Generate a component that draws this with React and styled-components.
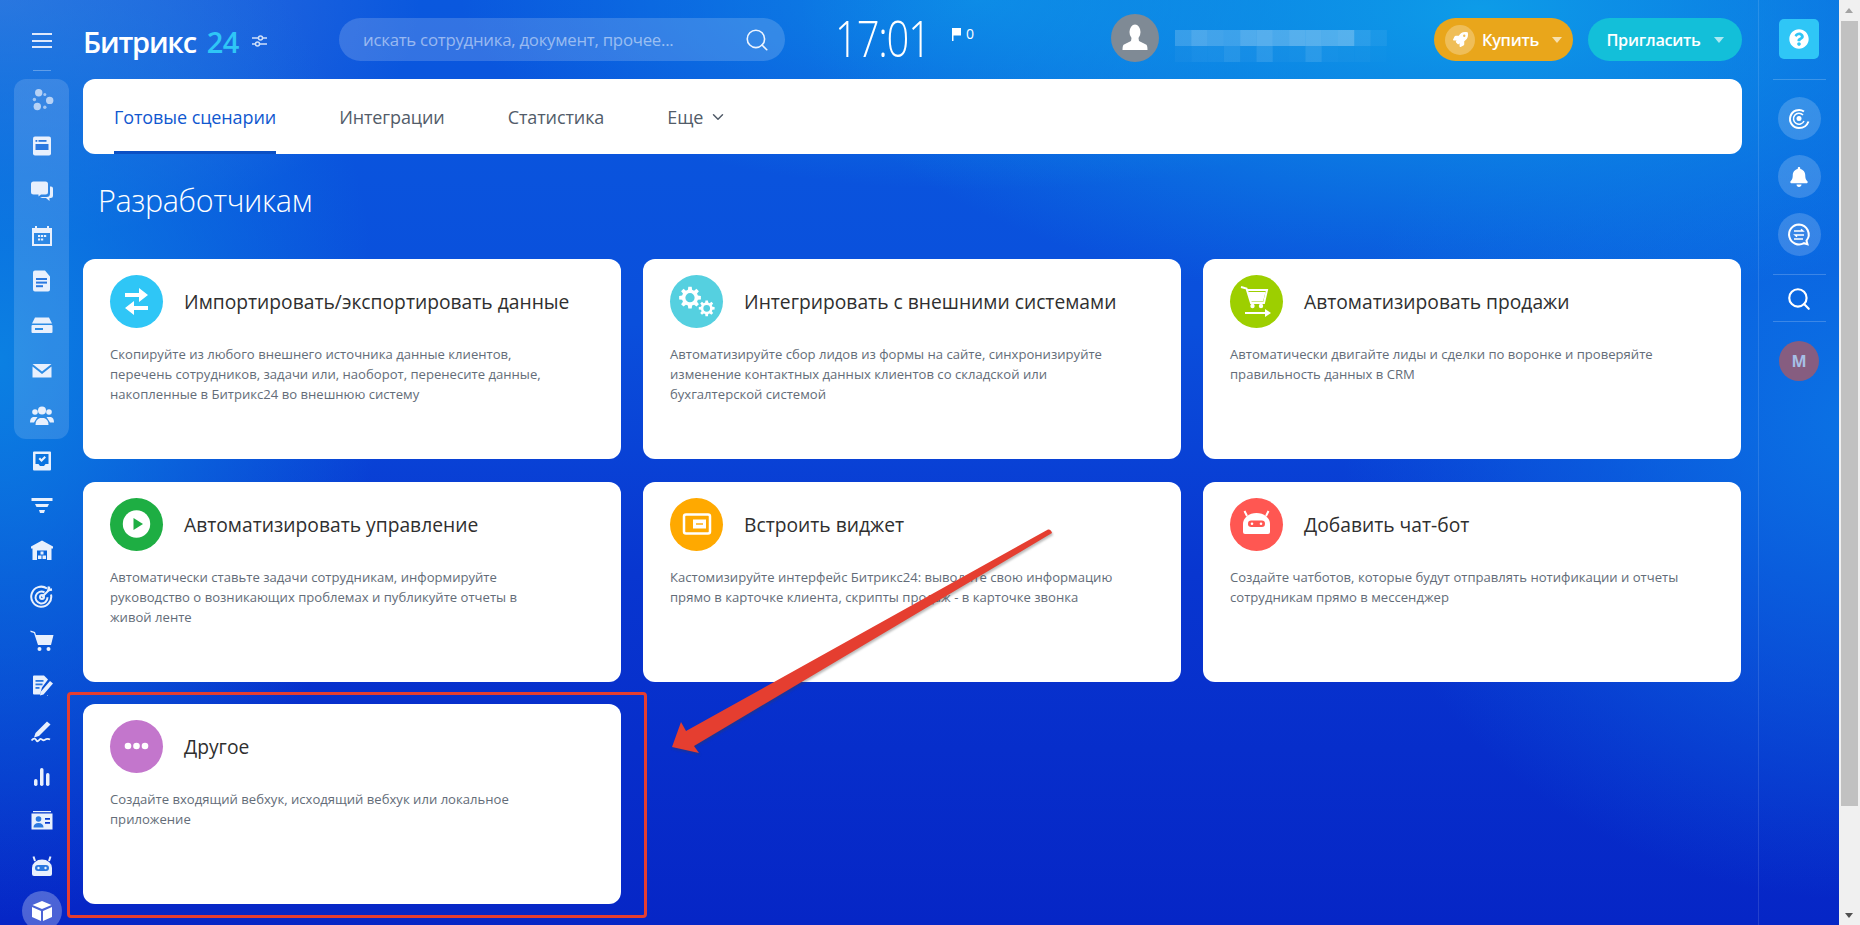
import React from "react";
import styled, { createGlobalStyle } from "styled-components";
import { Search, ChevronDown } from "lucide-react";
import { FaRocket, FaQuestionCircle, FaBell } from "react-icons/fa";

const GlobalStyle = createGlobalStyle`
  html, body {
    margin: 0;
    height: 100%;
    overflow: hidden;
  }
  body {
    font-family: "Open Sans", "Noto Sans", sans-serif;
  }
`;

const Page = styled.div`
  position: relative;
  display: flex;
  width: 1860px;
  height: 925px;
  overflow: hidden;
  background:
    radial-gradient(680px 300px at 1480px 10px, #0d9ce8 0%, rgba(13, 156, 232, 0) 100%),
    radial-gradient(520px 190px at 980px 0px, #0d86e6 0%, rgba(13, 134, 230, 0) 100%),
    radial-gradient(380px 560px at 0px 360px, #0b80e2 0%, rgba(11, 128, 226, 0) 100%),
    radial-gradient(420px 240px at 0px 0px, #3a72de 0%, rgba(58, 114, 222, 0) 100%),
    radial-gradient(520px 480px at 1860px 420px, #0b72e4 0%, rgba(11, 114, 228, 0) 100%),
    linear-gradient(180deg, #0a58de 0%, #0a4fdc 35%, #0836d0 62%, #0626c6 100%);
`;

const LeftNav = styled.nav`
  flex: 0 0 83px;
  display: flex;
  flex-direction: column;
  align-items: center;
`;

const Burger = styled.div`
  flex: none;
  width: 20px;
  height: 15px;
  margin-top: 33px;
  border-top: 2px solid #dfe9fb;
  border-bottom: 2px solid #dfe9fb;
  position: relative;
  box-sizing: border-box;
  &::after {
    content: "";
    position: absolute;
    left: 0;
    right: 0;
    top: 4.5px;
    height: 2px;
    background: #dfe9fb;
  }
`;

const NavRule = styled.div`
  flex: none;
  width: 18px;
  height: 1px;
  margin-top: 22px;
  margin-bottom: 8px;
  background: rgba(255, 255, 255, 0.3);
`;

const NavGroup = styled.div`
  flex: none;
  width: 55px;
  border-radius: 12px;
  background: rgba(255, 255, 255, 0.14);
`;

const NavItem = styled.div`
  flex: 0 0 45px;
  height: 45px;
  width: 55px;
  box-sizing: border-box;
  padding-bottom: 2px;
  display: flex;
  align-items: center;
  justify-content: center;
  svg {
    width: 24px;
    height: 24px;
    fill: #e8f0fd;
  }
`;

const ActiveNavItem = styled(NavItem)`
  position: relative;
  &::before {
    content: "";
    position: absolute;
    left: 7.5px;
    top: 2px;
    width: 40px;
    height: 40px;
    border-radius: 50%;
    background: rgba(255, 255, 255, 0.28);
  }
  svg {
    position: relative;
  }
`;

const Content = styled.div`
  flex: 1;
  min-width: 0;
  padding-right: 16px;
`;

const Header = styled.header`
  height: 79px;
  display: flex;
  align-items: flex-start;
`;

const Logo = styled.div`
  flex: 0 0 256px;
  display: flex;
  align-items: center;
  height: 40px;
  margin-top: 21px;
  color: #fff;
  font-size: 29px;
  font-weight: 600;
  letter-spacing: -1.2px;
  white-space: nowrap;
  span {
    color: #2fc6f6;
    font-weight: 600;
    margin-left: 11px;
    letter-spacing: -0.6px;
  }
  svg {
    margin-left: 12px;
    width: 17px;
    height: 14px;
  }
`;

const SearchBox = styled.div`
  flex: 0 0 446px;
  height: 43px;
  margin-top: 18px;
  box-sizing: border-box;
  padding: 0 15px 0 24px;
  display: flex;
  align-items: center;
  border-radius: 22px;
  background: rgba(255, 255, 255, 0.17);
  svg {
    color: #eef5ff;
    flex: none;
  }
`;

const SearchInput = styled.input`
  flex: 1;
  min-width: 0;
  padding: 0;
  border: 0;
  outline: 0;
  background: none;
  color: #fff;
  font-family: inherit;
  font-size: 16.8px;
  letter-spacing: -0.25px;
  &::placeholder {
    color: rgba(255, 255, 255, 0.5);
    opacity: 1;
  }
`;

const Clock = styled.div`
  flex: 0 0 92px;
  min-width: 0;
  margin: 12px 0 0 50px;
  color: #fff;
  font-size: 50px;
  font-weight: 300;
  line-height: 52px;
  letter-spacing: -1.5px;
  white-space: nowrap;
  transform: scaleX(0.8);
  transform-origin: left center;
`;

const Flag = styled.div`
  flex: 0 0 22px;
  min-width: 0;
  display: flex;
  align-items: center;
  gap: 5px;
  margin: 24px 0 0 25px;
  color: #fff;
  font-size: 14px;
  line-height: 20px;
  svg {
    width: 9px;
    height: 13px;
  }
`;

const UserPic = styled.div`
  flex: none;
  width: 48px;
  height: 48px;
  margin: 14px 0 0 137px;
  border-radius: 50%;
  background: #7f8a95;
  display: flex;
  align-items: center;
  justify-content: center;
  svg {
    width: 32px;
    height: 32px;
  }
`;

const Mosaic = styled.svg`
  flex: none;
  width: 212px;
  height: 32px;
  margin: 30px 0 0 16px;
`;

const BuyButton = styled.button`
  flex: none;
  height: 43px;
  margin: 18px 0 0 47px;
  padding: 0;
  width: ${(p) => p.$width}px;
  border: 0;
  border-radius: 22px;
  background: ${(p) => p.$bg};
  color: #fff;
  font-family: inherit;
  font-size: 16.3px;
  font-weight: 600;
  letter-spacing: -0.3px;
  display: flex;
  align-items: center;
  justify-content: center;
  &::after {
    content: "";
    margin-left: 13px;
    border-left: 5.5px solid transparent;
    border-right: 5.5px solid transparent;
    border-top: 6px solid rgba(255, 255, 255, 0.65);
  }
`;

const InviteButton = styled(BuyButton)`
  margin-left: 15px;
`;

const RocketBadge = styled.span`
  width: 30px;
  height: 30px;
  margin-right: 7px;
  border-radius: 50%;
  background: rgba(255, 255, 255, 0.27);
  display: flex;
  align-items: center;
  justify-content: center;
  font-size: 15px;
`;

const Tabs = styled.div`
  height: 75px;
  box-sizing: border-box;
  padding-left: 31px;
  display: flex;
  gap: 63px;
  border-radius: 12px;
  background: #fff;
  overflow: hidden;
`;

const Tab = styled.div`
  display: flex;
  align-items: center;
  gap: 6px;
  height: 75px;
  box-sizing: border-box;
  padding-top: 3px;
  border-bottom: 3px solid ${(p) => (p.$active ? "#0b50c4" : "transparent")};
  color: ${(p) => (p.$active ? "#1058d0" : "#525c69")};
  font-size: 18px;
  letter-spacing: -0.1px;
  white-space: nowrap;
`;

const Title = styled.h1`
  margin: 0;
  height: 105px;
  box-sizing: border-box;
  padding: 26px 0 0 15px;
  color: #fff;
  font-size: 30.5px;
  font-weight: 300;
  line-height: 40px;
  letter-spacing: -0.3px;
`;

const CardGrid = styled.div`
  display: grid;
  grid-template-columns: repeat(3, 538px);
  grid-auto-rows: 200px;
  gap: 22.5px 22px;
`;

const Card = styled.article`
  box-sizing: border-box;
  padding: 16px 27px 0;
  border-radius: 12px;
  background: #fff;
`;

const CardHead = styled.div`
  display: flex;
  align-items: center;
  gap: 21px;
`;

const CardIcon = styled.div`
  flex: none;
  width: 53px;
  height: 53px;
  border-radius: 50%;
  background: ${(p) => p.$color};
  svg {
    display: block;
    width: 53px;
    height: 53px;
  }
`;

const CardTitle = styled.h3`
  margin: 0;
  color: #2f2f2f;
  font-size: 19.25px;
  font-weight: 500;
  white-space: nowrap;
`;

const CardText = styled.p`
  margin: 16px 0 0;
  color: #636c78;
  font-size: 13.1px;
  line-height: 20px;
  white-space: nowrap;
`;

const RightBar = styled.aside`
  flex: 0 0 81px;
  box-sizing: border-box;
  padding-top: 19px;
  display: flex;
  flex-direction: column;
  align-items: center;
  border-left: 1px solid rgba(255, 255, 255, 0.12);
`;

const HelpButton = styled.div`
  width: 40px;
  height: 40px;
  flex: none;
  border-radius: 5px;
  background: #2fc6f6;
  color: #fff;
  font-size: 20px;
  display: flex;
  align-items: center;
  justify-content: center;
`;

const BarRule = styled.div`
  width: 53px;
  height: 1px;
  flex: none;
  margin: ${(p) => p.$top}px 0 ${(p) => p.$bottom}px;
  background: rgba(255, 255, 255, 0.2);
`;

const RoundTool = styled.div`
  width: 43px;
  height: 43px;
  flex: none;
  margin-bottom: 15px;
  border-radius: 50%;
  background: rgba(255, 255, 255, 0.18);
  color: #fff;
  font-size: 20px;
  display: flex;
  align-items: center;
  justify-content: center;
  svg.drawn {
    width: 26px;
    height: 26px;
  }
`;

const BarSearch = styled.div`
  height: 20px;
  flex: none;
  color: #fff;
  svg {
    display: block;
    margin: -3px;
  }
`;

const MemberPic = styled.div`
  width: 40px;
  height: 40px;
  flex: none;
  border-radius: 50%;
  background: #865d80;
  color: #a6bfe6;
  font-size: 16px;
  font-weight: 700;
  display: flex;
  align-items: center;
  justify-content: center;
`;

const Scrollbar = styled.div`
  flex: 0 0 21px;
  position: relative;
  background: #f0f0f0;
  &::before {
    content: "";
    position: absolute;
    left: 6px;
    top: 8px;
    border-left: 4.5px solid transparent;
    border-right: 4.5px solid transparent;
    border-bottom: 5px solid #a3a3a3;
  }
  &::after {
    content: "";
    position: absolute;
    left: 6px;
    bottom: 7px;
    border-left: 4.5px solid transparent;
    border-right: 4.5px solid transparent;
    border-top: 5px solid #505050;
  }
`;

const ScrollThumb = styled.div`
  margin: 21px 2px 0;
  height: 785px;
  background: #c1c1c1;
`;

const Callout = styled.div`
  position: absolute;
  left: 67px;
  top: 692px;
  width: 580px;
  height: 226px;
  box-sizing: border-box;
  border: 3px solid #e53e30;
  border-radius: 4px;
`;

const ArrowLayer = styled.svg`
  position: absolute;
  left: 0;
  top: 0;
  width: 1860px;
  height: 925px;
  pointer-events: none;
  filter: drop-shadow(1px 2px 1px rgba(60, 60, 60, 0.35));
`;

const navBg = "#2a78e0";

const navIcons = [
  <g key="feed">
    <g opacity="0.72">
      <circle cx="8.7" cy="3.8" r="3.7" />
      <circle cx="19.7" cy="11.4" r="3.7" />
      <circle cx="7.3" cy="17.5" r="3.7" />
    </g>
    <g opacity="0.6">
      <circle cx="4.4" cy="10.5" r="1.7" />
      <circle cx="14.8" cy="5.4" r="1.5" />
      <circle cx="14.8" cy="18.2" r="1.7" />
    </g>
  </g>,
  <g key="window">
    <rect x="3" y="2.5" width="18" height="19" rx="2" />
    <rect x="5.5" y="10" width="13" height="6" fill={navBg} />
    <rect x="5.5" y="6" width="1.8" height="1.8" fill={navBg} />
    <rect x="8.5" y="6" width="8" height="1.8" fill={navBg} />
  </g>,
  <g key="chat">
    <path d="M3.5 2.5h12a2.5 2.5 0 0 1 2.5 2.5v8a2.5 2.5 0 0 1-2.5 2.5H11l-2.5 2v-2H3.5A2.5 2.5 0 0 1 1 13V5a2.5 2.5 0 0 1 2.5-2.5z" />
    <path d="M20 7.5h1a2 2 0 0 1 2 2v7a2.5 2.5 0 0 1-2.5 2.5h-1v3l-3.5-3h-4l-2-1h6.5a3.5 3.5 0 0 0 3.5-3.5z" />
  </g>,
  <g key="calendar">
    <path fillRule="evenodd" d="M2 4h3V2h2v2h10V2h2v2h3v18H2zM4 9v11h16V9z" />
    <path d="M8 11h2.2v2H8zM11 11h2.2v2H11zM14 11h2.2v2H14zM8 14.5h2.2v2H8zM11 14.5h2.2v2H11z" />
  </g>,
  <g key="doc">
    <path d="M5 1.5h10l5 6v13a2 2 0 0 1-2 2H5a2 2 0 0 1-2-2v-17a2 2 0 0 1 2-2z" />
    <rect x="6" y="9" width="11" height="2" fill={navBg} />
    <rect x="6" y="12.6" width="11" height="2" fill={navBg} />
    <rect x="6" y="16.2" width="7" height="2" fill={navBg} />
  </g>,
  <g key="drive">
    <path d="M5 3.5h14l3 6H2z" />
    <path
      fillRule="evenodd"
      d="M2.5 11h19a1 1 0 0 1 1 1v6a1 1 0 0 1-1 1h-19a1 1 0 0 1-1-1v-6a1 1 0 0 1 1-1zM5 14v2h8v-2z"
    />
  </g>,
  <g key="mail">
    <path d="M2.5 5h19L12 12.5z" />
    <path d="M2.5 7.5L12 15l9.5-7.5V18.5h-19z" />
  </g>,
  <g key="people">
    <circle cx="12" cy="6.5" r="4" />
    <path d="M5.5 21c0-4 1.5-6 4.5-7h4c3 1 4.5 3 4.5 7z" />
    <circle cx="5" cy="8" r="2.8" />
    <circle cx="19" cy="8" r="2.8" />
    <path d="M0 18.5c0-3 1-5 3-5.500h4.500L4 18.500zM24 18.500c0-3-1-5-3-5.500h-4.500l3.500 5.500z" />
  </g>,
  <g key="task">
    <path
      fillRule="evenodd"
      d="M4 2.5h16a1 1 0 0 1 1 1v17a1 1 0 0 1-1 1H4a1 1 0 0 1-1-1v-17a1 1 0 0 1 1-1zM5.500 5v10h3l1.500 2h4l1.500-2h3V5z"
    />
    <path d="M8.500 10l1.500-1.500 1.500 1.500 3-3 1.500 1.500-4.500 4.500z" />
  </g>,
  <g key="funnel">
    <rect x="1.5" y="4" width="21" height="3" />
    <path d="M5 10h14l-1.500 3h-11z" />
    <path d="M9 16h6l-1 3h-4z" />
  </g>,
  <g key="store">
    <path fillRule="evenodd" d="M12 1.5L23 7.5v2h-1.500V21h-19V9.500H1v-2zM7 11.500V21h10v-9.500z" />
    <path d="M10.500 12.500h3v3h-3zM8 16.500h3.500v3.500H8zM12.500 16.500H16v3.500h-3.500z" />
  </g>,
  <g key="target" fill="none" stroke="#e8f0fd" strokeWidth="2">
    <path d="M17 4.5A10 10 0 1 0 21 10.500" />
    <path d="M14.500 8.300a6 6 0 1 0 3 5" />
    <circle cx="12" cy="13" r="2" />
    <path d="M12 13l8-8" />
    <path d="M19 2.500l-.5 3.500 3.500-.5" strokeWidth="2.5" />
  </g>,
  <g key="cart">
    <path d="M0.5 1.5l4.500 1.500 1 3h17.500l-2.500 10H8L4 4 0.500 3z" />
    <circle cx="9.5" cy="20" r="2" />
    <circle cx="18.5" cy="20" r="2" />
  </g>,
  <g key="docpen">
    <path d="M4 1.5h10l4 4-6 8-2 7H4a1 1 0 0 1-1-1v-17a1 1 0 0 1 1-1z" />
    <rect x="5.5" y="6" width="8" height="1.8" fill={navBg} />
    <rect x="5.5" y="9.5" width="7" height="1.8" fill={navBg} />
    <rect x="5.5" y="13" width="4" height="1.8" fill={navBg} />
    <path d="M20 7l3 2.500-9.500 11-3.500 1 .5-3.500zM17 21.500h1v.500h-1z" />
  </g>,
  <g key="sign">
    <path d="M17 2.5l3.500 3L9 17l-5 1.500 1.500-4.500z" />
    <path
      d="M1.5 21.5c2-2.500 3.500-2.500 5 0s3-2 4.500-1.500 2 2 3.500 1 3-2 5.500-.5"
      fill="none"
      stroke="#e8f0fd"
      strokeWidth="1.8"
    />
  </g>,
  <g key="bars">
    <rect x="4" y="15" width="3.5" height="7" rx="1.7" />
    <rect x="10" y="4" width="3.5" height="18" rx="1.7" />
    <rect x="16" y="9" width="3.5" height="13" rx="1.7" />
  </g>,
  <g key="contact">
    <rect x="3" y="2" width="18" height="1.2" />
    <path fillRule="evenodd" d="M1.5 4.5h21v16h-21zM15 9v1.800h5V9zM15 13v1.800h5V13z" />
    <circle cx="8.5" cy="10" r="2.8" fill={navBg} />
    <path d="M3.5 18.5c0-3 2-4.500 5-4.500s5 1.500 5 4.500z" fill={navBg} />
  </g>,
  <g key="bot">
    <path d="M2 20v-6a10 8.500 0 0 1 20 0v6a2 2 0 0 1-2 2H4a2 2 0 0 1-2-2z" />
    <path d="M5 7L3.5 2.500M19 7l1.500-4.500" stroke="#e8f0fd" strokeWidth="2" />
    <rect x="5" y="11" width="14" height="6" rx="3" fill={navBg} />
    <circle cx="8.5" cy="14" r="1.2" />
    <circle cx="15.5" cy="14" r="1.2" />
  </g>,
];

const CubeIcon = () => (
  <svg viewBox="0 0 24 24">
    <path d="M12 2l9.500 4L12 10 2.500 6z" fill="#fff" />
    <path d="M2 8l9 4v10l-9-4z" fill="#fff" />
    <path d="M22 8l-9 4v10l9-4z" fill="#fff" />
  </svg>
);

// gear outline with a round hole, teeth computed around the circle
const gearPath = (cx, cy, r, teeth = 8) => {
  const inner = r * 0.74;
  const hole = r * 0.42;
  const step = (Math.PI * 2) / teeth;
  const pts = [];
  for (let i = 0; i < teeth; i++) {
    const a = i * step;
    [
      [inner, -0.3],
      [r, -0.18],
      [r, 0.18],
      [inner, 0.3],
    ].forEach(([rad, off]) => {
      const t = a + off * step * 1.1;
      pts.push(`${(cx + rad * Math.cos(t)).toFixed(2)} ${(cy + rad * Math.sin(t)).toFixed(2)}`);
    });
  }
  return `M${pts.join("L")}Z M${cx - hole} ${cy}a${hole} ${hole} 0 1 0 ${hole * 2} 0a${hole} ${hole} 0 1 0 ${-hole * 2} 0Z`;
};

const cards = [
  {
    color: "#2fc6f6",
    title: "Импортировать/экспортировать данные",
    lines: [
      "Скопируйте из любого внешнего источника данные клиентов,",
      "перечень сотрудников, задачи или, наоборот, перенесите данные,",
      "накопленные в Битрикс24 во внешнюю систему",
    ],
    icon: (
      <g fill="#fff">
        <path d="M15 18h14v-5l9 7-9 7v-5H15z" />
        <path d="M38 31H24v-5l-9 7 9 7v-5h14z" />
      </g>
    ),
  },
  {
    color: "#55d0e0",
    title: "Интегрировать с внешними системами",
    lines: [
      "Автоматизируйте сбор лидов из формы на сайте, синхронизируйте",
      "изменение контактных данных клиентов со складской или",
      "бухгалтерской системой",
    ],
    icon: (
      <g fill="#fff" fillRule="evenodd">
        <path d={gearPath(20, 22.7, 11)} />
        <path d={gearPath(36.7, 33.3, 8)} />
      </g>
    ),
  },
  {
    color: "#9dcf00",
    title: "Автоматизировать продажи",
    lines: [
      "Автоматически двигайте лиды и сделки по воронке и проверяйте",
      "правильность данных в CRM",
    ],
    icon: (
      <g fill="#fff">
        <path d="M11 12l5.500 1.500L21 28h13l3-13H17" fill="none" stroke="#fff" strokeWidth="2" />
        <path d="M18 17h17.500l-2.500 9.500H21z" />
        <circle cx="22.5" cy="31" r="2.2" />
        <circle cx="31" cy="31" r="2.2" />
        <path d="M15 37h20v-3l6 4-6 4v-3H15z" />
      </g>
    ),
  },
  {
    color: "#1eae43",
    title: "Автоматизировать управление",
    lines: [
      "Автоматически ставьте задачи сотрудникам, информируйте",
      "руководство о возникающих проблемах и публикуйте отчеты в",
      "живой ленте",
    ],
    icon: (
      <g>
        <circle cx="26.5" cy="26" r="13.7" fill="#fff" />
        <path d="M23.5 20l9.500 6-9.500 6z" fill="#1eae43" />
      </g>
    ),
  },
  {
    color: "#ffa900",
    title: "Встроить виджет",
    lines: [
      "Кастомизируйте интерфейс Битрикс24: выводите свою информацию",
      "прямо в карточке клиента, скрипты продаж - в карточке звонка",
    ],
    icon: (
      <g>
        <rect x="14" y="16.5" width="26" height="19" rx="2" fill="none" stroke="#fff" strokeWidth="2.5" />
        <rect x="23" y="21.5" width="13" height="9" fill="#fff" />
        <rect x="26" y="25.3" width="7" height="1.4" fill="#ffa900" />
      </g>
    ),
  },
  {
    color: "#ff5752",
    title: "Добавить чат-бот",
    lines: [
      "Создайте чатботов, которые будут отправлять нотификации и отчеты",
      "сотрудникам прямо в мессенджер",
    ],
    icon: (
      <g>
        <path d="M13 34v-8a13.500 11 0 0 1 27 0v8a2 2 0 0 1-2 2H15a2 2 0 0 1-2-2z" fill="#fff" />
        <path d="M17 18l-2.500-5M36 18l2.500-5" stroke="#fff" strokeWidth="2" />
        <rect x="18" y="22.5" width="17" height="6.5" rx="3.2" fill="#ff5752" />
        <circle cx="22" cy="25.7" r="1.3" fill="#fff" />
        <circle cx="31" cy="25.7" r="1.3" fill="#fff" />
      </g>
    ),
  },
  {
    color: "#c376cc",
    title: "Другое",
    lines: [
      "Создайте входящий вебхук, исходящий вебхук или локальное",
      "приложение",
    ],
    icon: (
      <g fill="#fff">
        <circle cx="18" cy="26" r="3.3" />
        <circle cx="26.5" cy="26" r="3.3" />
        <circle cx="35" cy="26" r="3.3" />
      </g>
    ),
  },
];

const mosaicRows = [
  [0.18, 0.26, 0.22, 0.2, 0.28, 0.3, 0.26, 0.3, 0.3, 0.28, 0.3, 0.12, 0.06],
  [0.03, 0.05, 0.05, 0.1, 0.04, 0.12, 0.03, 0.04, 0.12, 0.04, 0.03, 0.03, 0.01],
];

export default function App() {
  return (
    <Page>
      <GlobalStyle />
      <LeftNav>
        <Burger />
        <NavRule />
        <NavGroup>
          {navIcons.slice(0, 8).map((icon) => (
            <NavItem key={icon.key}>
              <svg viewBox="0 0 24 24">{icon}</svg>
            </NavItem>
          ))}
        </NavGroup>
        {navIcons.slice(8).map((icon) => (
          <NavItem key={icon.key}>
            <svg viewBox="0 0 24 24">{icon}</svg>
          </NavItem>
        ))}
        <ActiveNavItem>
          <CubeIcon />
        </ActiveNavItem>
      </LeftNav>

      <Content>
        <Header>
          <Logo>
            Битрикс<span>24</span>
            <svg viewBox="0 0 17 14" fill="none" stroke="#cfe0fa" strokeWidth="1.5">
              <path d="M1 4h6M12 4h4M1 10h3M9 10h7" />
              <circle cx="9.5" cy="4" r="2" />
              <circle cx="6.5" cy="10" r="2" />
            </svg>
          </Logo>
          <SearchBox>
            <SearchInput placeholder="искать сотрудника, документ, прочее..." />
            <Search size={26} strokeWidth={1.5} />
          </SearchBox>
          <Clock>17:01</Clock>
          <Flag>
            <svg viewBox="0 0 9 13" fill="#fff">
              <path d="M0 0h9v7.500H1.500V13H0z" />
            </svg>
            0
          </Flag>
          <UserPic>
            <svg viewBox="0 0 32 32" fill="#fff">
              <ellipse cx="16" cy="10" rx="5.5" ry="7.5" />
              <path d="M12.500 16h7l.5 3 7 3.500c1 .6 1.500 2 1.500 5.500h-25c0-3.500.5-4.900 1.500-5.500l7-3.500z" />
            </svg>
          </UserPic>
          <Mosaic viewBox="0 0 212 32">
            {mosaicRows.map((row, y) =>
              row.map((o, x) => (
                <rect key={`${y}-${x}`} x={x * 16.3} y={y * 16} width="16.3" height="16" fill="#fff" opacity={o} />
              ))
            )}
          </Mosaic>
          <BuyButton $bg="#e9a61b" $width={139}>
            <RocketBadge>
              <FaRocket />
            </RocketBadge>
            Купить
          </BuyButton>
          <InviteButton $bg="#13bfd9" $width={154}>
            Пригласить
          </InviteButton>
        </Header>

        <Tabs>
          <Tab $active>Готовые сценарии</Tab>
          <Tab>Интеграции</Tab>
          <Tab>Статистика</Tab>
          <Tab>
            Еще
            <ChevronDown size={18} strokeWidth={2} />
          </Tab>
        </Tabs>

        <Title>Разработчикам</Title>

        <CardGrid>
          {cards.map((card) => (
            <Card key={card.title}>
              <CardHead>
                <CardIcon $color={card.color}>
                  <svg viewBox="0 0 53 53">{card.icon}</svg>
                </CardIcon>
                <CardTitle>{card.title}</CardTitle>
              </CardHead>
              <CardText>
                {card.lines.map((line) => (
                  <React.Fragment key={line}>
                    {line}
                    <br />
                  </React.Fragment>
                ))}
              </CardText>
            </Card>
          ))}
        </CardGrid>
      </Content>

      <RightBar>
        <HelpButton>
          <FaQuestionCircle />
        </HelpButton>
        <BarRule $top={20} $bottom={17} />
        <RoundTool>
          <svg className="drawn" viewBox="0 0 26 26" fill="none" stroke="#fff" strokeWidth="2">
            <path d="M18 5.500A9 9 0 1 0 13 22c4.500 0 8-2.500 9.500-6.500" />
            <path d="M17 9a5.500 5.500 0 1 0 1 6" strokeWidth="1.5" />
            <circle cx="13" cy="12.5" r="2.5" fill="#fff" stroke="none" />
          </svg>
        </RoundTool>
        <RoundTool>
          <FaBell />
        </RoundTool>
        <RoundTool>
          <svg className="drawn" viewBox="0 0 26 26" fill="none" stroke="#fff" strokeWidth="2">
            <path d="M13 2.500a10 10 0 1 0 5 18.700l3.500 1-1-3.500A10 10 0 0 0 13 2.500z" />
            <path d="M8 9h9l-2-1.800M18 13H9l2 1.800M8 17h9" strokeWidth="1.4" />
          </svg>
        </RoundTool>
        <BarRule $top={3} $bottom={14} />
        <BarSearch>
          <Search size={26} strokeWidth={2} />
        </BarSearch>
        <BarRule $top={12} $bottom={19} />
        <MemberPic>M</MemberPic>
      </RightBar>

      <Scrollbar>
        <ScrollThumb />
      </Scrollbar>

      <Callout />
      <ArrowLayer viewBox="0 0 1860 925">
        <path
          d="M1048 529.500 Q1051 529 1052 533 L694 746 L699 753 L672 747 L681 722 L686 731 Z"
          fill="#e53e30"
        />
      </ArrowLayer>
    </Page>
  );
}
